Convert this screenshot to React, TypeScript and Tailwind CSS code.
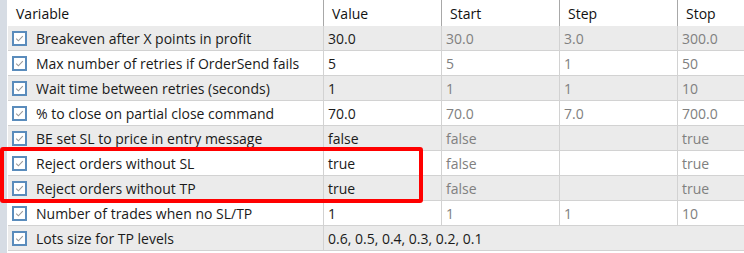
import React from "react";

type Row = { name: string; value: string; start?: string; step?: string; stop?: string; span?: boolean };

const rows: Row[] = [
  { name: "Breakeven after X points in profit", value: "30.0", start: "30.0", step: "3.0", stop: "300.0" },
  { name: "Max number of retries if OrderSend fails", value: "5", start: "5", step: "1", stop: "50" },
  { name: "Wait time between retries (seconds)", value: "1", start: "1", step: "1", stop: "10" },
  { name: "% to close on partial close command", value: "70.0", start: "70.0", step: "7.0", stop: "700.0" },
  { name: "BE set SL to price in entry message", value: "false", start: "false", step: "", stop: "true" },
  { name: "Reject orders without SL", value: "true", start: "false", step: "", stop: "true" },
  { name: "Reject orders without TP", value: "true", start: "false", step: "", stop: "true" },
  { name: "Number of trades when no SL/TP", value: "1", start: "1", step: "1", stop: "10" },
  { name: "Lots size for TP levels", value: "0.6, 0.5, 0.4, 0.3, 0.2, 0.1", span: true },
];

function Check() {
  return (
    <div className="w-[15px] h-[15px] border-2 border-[#5a8cbc] bg-white flex items-center justify-center shrink-0">
      <svg width="11" height="11" viewBox="0 0 11 11">
        <path d="M2.2 5.6 L4.4 7.8 L8.8 3.2" fill="none" stroke="#9a9a9a" strokeWidth="1.1" />
      </svg>
    </div>
  );
}

export default function App() {
  return (
    <div
      className="relative w-[744px] h-[253px] bg-white flex overflow-hidden text-[14px]"
      style={{ fontFamily: '"Open Sans", "Noto Sans", sans-serif' }}
    >
      <div className="w-[7px] bg-[#d6dce4] shrink-0" />
      <div className="w-[1px] bg-white shrink-0" />
      <div className="flex-1 flex flex-col">
        <div className="grid grid-cols-[315px_118px_118px_118px_67px] h-[26px] text-[#111]">
          <div className="pl-[8px] flex items-center">Variable</div>
          <div className="pl-[8px] flex items-center border-l border-[#a8a8a8]">Value</div>
          <div className="pl-[8px] flex items-center border-l border-[#a8a8a8]">Start</div>
          <div className="pl-[8px] flex items-center border-l border-[#a8a8a8]">Step</div>
          <div className="pl-[8px] flex items-center border-l border-[#a8a8a8]">Stop</div>
        </div>
        {rows.map((r, i) => (
          <div
            key={i}
            className={`grid grid-cols-[315px_118px_118px_118px_67px] h-[25px] border-b border-[#d2d2d2] ${
              i % 2 === 0 ? "bg-[#ebebeb]" : "bg-white"
            }`}
          >
            <div className="flex items-center pl-[4px] gap-[9px] text-[#1a1a1a]">
              <Check />
              <span>{r.name}</span>
            </div>
            {r.span ? (
              <div className="col-span-4 flex items-center pl-[4px] border-l border-[#d2d2d2] text-[#1a1a1a]">
                {r.value}
              </div>
            ) : (
              <>
                <div className="flex items-center pl-[4px] border-l border-[#d2d2d2] text-[#1a1a1a]">{r.value}</div>
                <div className="flex items-center pl-[4px] border-l border-[#d2d2d2] text-[#808080]">{r.start}</div>
                <div className="flex items-center pl-[4px] border-l border-[#d2d2d2] text-[#808080]">{r.step}</div>
                <div className="flex items-center pl-[4px] border-l border-[#d2d2d2] text-[#808080]">{r.stop}</div>
              </>
            )}
          </div>
        ))}
      </div>
      <div className="absolute left-0 top-[147px] w-[423px] h-[56px] border-[4px] border-[#ff0000] rounded-[3px]" />
    </div>
  );
}
